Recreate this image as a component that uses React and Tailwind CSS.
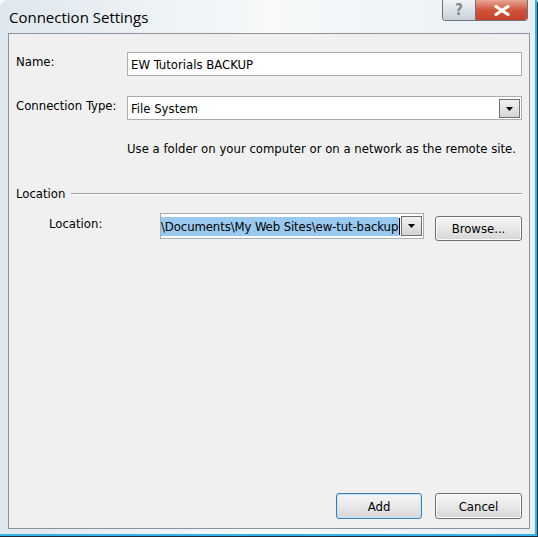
import React from "react";

const ui = { fontFamily: '"DejaVu Sans Condensed", "Liberation Sans", sans-serif' };

function Caret() {
  return (
    <svg width="7" height="4" viewBox="0 0 7 4">
      <path d="M0 0h7L3.5 4z" fill="#000" />
    </svg>
  );
}

function DropButton({ className = "" }) {
  return (
    <div
      className={
        "shrink-0 flex items-center justify-center border border-[#707070] bg-gradient-to-b from-[#f2f2f2] to-[#d4d4d4] " +
        className
      }
    >
      <Caret />
    </div>
  );
}

function Button({ children, primary, className = "" }) {
  return (
    <button
      className={
        "flex items-center justify-center rounded-[3px] border text-[13px] leading-[15px] text-black bg-gradient-to-b from-[#f6f6f6] via-[#e8e8e8] to-[#d6d6d6] " +
        (primary ? "border-[#3c7fb1] shadow-[inset_0_0_0_1px_#bfe6f8] " : "border-[#707070] shadow-[inset_0_0_0_1px_#fcfcfc] ") +
        className
      }
    >
      {children}
    </button>
  );
}

export default function App() {
  return (
    <div style={ui} className="w-[538px] h-[537px] overflow-hidden">
      <div className="w-[538px] h-[537px] rounded-tl-[7px] rounded-tr-[4px] border-r border-b border-[#1b2b3a] bg-gradient-to-r from-[#dfe8ee] via-[#f7f9fa] to-[#e9eff3]">
        <div className="h-[536px] w-[537px] border-r-2 border-b-2 border-[#35b4e8] flex flex-col">
          {/* title bar */}
          <div className="h-[33px] flex items-start justify-between shrink-0">
            <div
              className="pl-[9px] pt-[7px] text-[15px] leading-[20px] text-black"
              style={{ fontFamily: '"Open Sans", "Noto Sans", sans-serif' }}
            >
              Connection Settings
            </div>
            <div className="flex mr-[7px] h-[21px] rounded-b-[4px] border border-t-0 border-[#6a7480] overflow-hidden">
              <div className="w-[33px] flex items-center justify-center border-r border-[#6a7480] bg-gradient-to-b from-[#f1f4f6] to-[#c9d1d8] text-[15px] leading-[15px] font-bold text-[#7d868e]">
                ?
              </div>
              <div className="w-[51px] flex items-center justify-center bg-gradient-to-b from-[#e8a493] via-[#d0553b] to-[#c6402a]">
                <svg width="16" height="11" viewBox="0 0 16 11">
                  <path d="M2 1.5l12 8M14 1.5l-12 8" stroke="#fff" strokeWidth="3.2" strokeLinecap="round" />
                </svg>
              </div>
            </div>
          </div>

          {/* client panel */}
          <div className="ml-[8px] w-[522px] h-[496px] border border-[#8a939b] bg-[#f0f0f0] flex flex-col px-[7px] text-[13px] leading-[15px] text-black">
            <div className="flex mt-[18px] h-[24px]">
              <div className="w-[111px] pt-[2px]">Name:</div>
              <div className="flex-1 border border-[#abadb3] bg-white flex items-center pl-[3px] pt-[1px]">
                EW Tutorials BACKUP
              </div>
            </div>

            <div className="flex mt-[20px] h-[24px]">
              <div className="w-[111px] pt-[2px]">Connection Type:</div>
              <div className="flex-1 border border-[#abadb3] bg-white flex items-center pl-[3px] pr-[1px]">
                <span className="flex-1 pt-[1px]">File System</span>
                <DropButton className="w-[21px] h-[19px] mt-[1px]" />
              </div>
            </div>

            <div className="ml-[111px] mt-[21px]">Use a folder on your computer or on a network as the remote site.</div>

            <div className="flex items-center mt-[30px]">
              <span>Location</span>
              <div className="flex-1 ml-[6px] h-px bg-[#a0a0a0] border-b border-white box-content" />
            </div>

            <div className="flex mt-[12px] items-start">
              <div className="w-[144px] pl-[33px] pt-[3px]">Location:</div>
              <div className="w-[264px] h-[26px] border border-[#abadb3] bg-white flex items-center pr-[1px]">
                <span className="flex-1 min-w-0 whitespace-nowrap flex items-center">
                  <span className="bg-[#99c9ef] pr-[1px] py-[2px] tracking-[-0.1px]">\Documents\My Web Sites\ew-tut-backup</span>
                  <span className="inline-block w-px h-[17px] bg-black" />
                </span>
                <DropButton className="w-[21px] h-[20px]" />
              </div>
              <Button className="ml-[11px] mt-[3px] w-[87px] h-[25px]">Browse...</Button>
            </div>

            <div className="flex-1" />

            <div className="flex justify-end gap-[13px] mb-[9px]">
              <Button primary className="w-[86px] h-[26px]">Add</Button>
              <Button className="w-[87px] h-[26px]">Cancel</Button>
            </div>
          </div>
        </div>
      </div>
    </div>
  );
}
